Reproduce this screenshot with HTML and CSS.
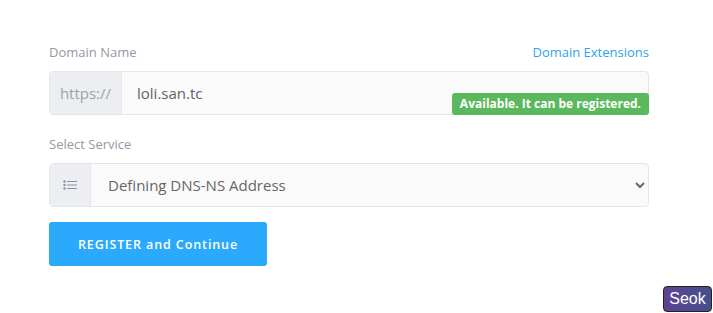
FILE: index.html
```html
<!DOCTYPE html>
<html lang="en">

<head>
    <meta charset="UTF-8" />
    <title>Register Domain</title>
    <link rel="stylesheet" href="styles.css">
</head>

<body>

    <div class="form-wrap">
        <div class="label-row">
            <label class="field-label" for="domain">Domain Name</label>
            <a class="ext-link" href="#">Domain Extensions</a>
        </div>
        <div class="input-group">
            <span class="addon addon-text">https://</span>
            <input class="field" id="domain" type="text" value="loli.san.tc" />
            <span class="status-badge">Available. It can be registered.</span>
        </div>

        <div class="label-row">
            <label class="field-label" for="service">Select Service</label>
        </div>
        <div class="input-group">
            <span class="addon addon-icon">
                <svg width="14" height="10" viewBox="0 0 14 10">
                    <circle cx="1.5" cy="1.5" r="1.2" fill="#8a94a6" />
                    <circle cx="1.5" cy="5" r="1.2" fill="#8a94a6" />
                    <circle cx="1.5" cy="8.5" r="1.2" fill="#8a94a6" />
                    <rect x="4" y="1" width="10" height="1" fill="#8a94a6" />
                    <rect x="4" y="4.5" width="10" height="1" fill="#8a94a6" />
                    <rect x="4" y="8" width="10" height="1" fill="#8a94a6" />
                </svg>
            </span>
            <select class="field select-field" id="service">
                <option>Defining DNS-NS Address</option>
                <option>Domain Forwarding</option>
            </select>
        </div>

        <button class="submit-btn">REGISTER and Continue</button>
    </div>

    <button class="seok-btn">Seok</button>

</body>

</html>
```

FILE: styles.css
```css
body {
    margin: 0;
    padding: 0;
    font-family: "Open Sans", sans-serif;
    background: #fff;
    color: #555;
    min-height: 313px;
    position: relative;
}

.form-wrap {
    width: 600px;
    margin-left: 49px;
    padding-top: 43px;
}

.label-row {
    display: flex;
    justify-content: space-between;
    align-items: center;
    height: 18px;
    margin-bottom: 10px;
}

.field-label {
    font-size: 13px;
    color: #9299a5;
}

.ext-link {
    font-size: 13px;
    color: #2ea4e8;
    text-decoration: none;
}

.input-group {
    display: flex;
    position: relative;
    height: 44px;
    border: 1px solid #e3e6ea;
    border-radius: 4px;
    box-sizing: border-box;
    background: #fafafa;
    margin-bottom: 20px;
}

.addon {
    display: flex;
    align-items: center;
    justify-content: center;
    background: #eceef1;
    border-right: 1px solid #e3e6ea;
    border-radius: 4px 0 0 4px;
}

.addon-text {
    width: 71px;
    font-size: 15px;
    color: #9ea3aa;
}

.addon-icon {
    width: 40px;
}

.field {
    flex: 1;
    border: none;
    background: transparent;
    font-family: "Open Sans", sans-serif;
    font-size: 15px;
    color: #5f6368;
    padding: 0 15px;
    outline: none;
}

.select-field {
    padding: 0 10px 0 13px;
    color: #666;
}

.status-badge {
    position: absolute;
    right: -1px;
    bottom: -1px;
    background: #5cb85c;
    color: #fff;
    font-size: 12px;
    font-weight: bold;
    padding: 3px 8px;
    border-radius: 3px;
    line-height: 16px;
}

.submit-btn {
    margin-top: -5px;
    width: 218px;
    height: 44px;
    background: #2aa9fd;
    color: #fff;
    border: none;
    border-radius: 3px;
    font-family: "Open Sans", sans-serif;
    font-size: 12.5px;
    font-weight: 600;
    letter-spacing: 0.9px;
    cursor: pointer;
}

.seok-btn {
    position: absolute;
    right: 1px;
    bottom: 1px;
    width: 49px;
    height: 26px;
    background: linear-gradient(to right, #5e4391, #44508c);
    color: #fff;
    border: 1px solid #222;
    border-radius: 4px;
    font-family: "Liberation Sans", sans-serif;
    font-size: 16px;
    padding: 0;
}
```
